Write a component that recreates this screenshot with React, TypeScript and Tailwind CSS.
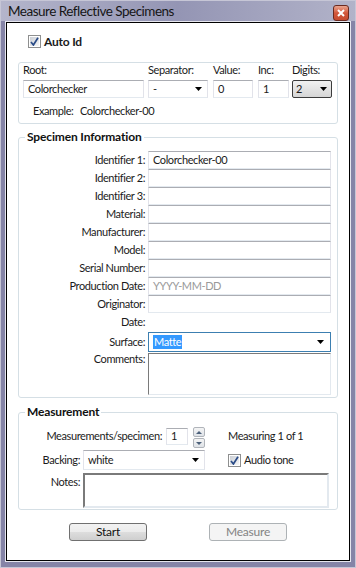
import React from "react";

function Arrow() {
  return (
    <svg width="7" height="4" viewBox="0 0 7 4" className="shrink-0">
      <path d="M0 0h7L3.5 4z" fill="#000" />
    </svg>
  );
}

function CheckBox() {
  return (
    <div className="w-[13px] h-[13px] border border-[#8e8f8f] bg-white p-[1px] shrink-0">
      <div className="w-full h-full bg-gradient-to-br from-[#cbcfd5] to-[#f6f6f6] flex items-center justify-center">
        <svg width="9" height="9" viewBox="0 0 9 9">
          <path d="M1 5l2.4 3L8 0.8" stroke="#2a4b87" strokeWidth="1.7" fill="none" />
        </svg>
      </div>
    </div>
  );
}

function TextBox({ className = "", children }: { className?: string; children?: React.ReactNode }) {
  return (
    <div
      className={`border border-[#e2e3ea] border-t-[#abadb3] border-b-[#e3e9ef] bg-white flex items-center pl-[4px] ${className}`}
    >
      {children}
    </div>
  );
}

function Combo({ className = "", children }: { className?: string; children?: React.ReactNode }) {
  return (
    <div
      className={`border border-[#e2e3ea] border-t-[#abadb3] border-b-[#e3e9ef] bg-white flex items-center justify-between pl-[4px] pr-[5px] ${className}`}
    >
      <span>{children}</span>
      <Arrow />
    </div>
  );
}

function Group({ title, className = "", children }: { title?: string; className?: string; children: React.ReactNode }) {
  return (
    <div className={`relative border border-[#d5dfe5] rounded-[3px] ${className}`}>
      {title && (
        <div className="absolute -top-[8px] left-[6px] px-[2px] bg-white font-bold text-[12px] leading-[14px] tracking-[-0.15px] text-[#111]">
          {title}
        </div>
      )}
      {children}
    </div>
  );
}

const specimenRows = [
  { label: "Identifier 1:", value: "Colorchecker-00" },
  { label: "Identifier 2:" },
  { label: "Identifier 3:" },
  { label: "Material:" },
  { label: "Manufacturer:" },
  { label: "Model:" },
  { label: "Serial Number:" },
  { label: "Production Date:", placeholder: "YYYY-MM-DD" },
  { label: "Originator:" },
];

export default function App() {
  return (
    <div className="w-[356px] h-[568px] border border-[#c6c6d6] bg-[#8584a7] flex flex-col font-['Lato',sans-serif] text-[11px] tracking-[-0.4px] text-[#1b1b1b] overflow-hidden">
      {/* Title bar */}
      <div className="h-[20px] bg-gradient-to-r from-[#b4b5cb] via-[#9495b4] to-[#b2b3c9] flex items-start justify-between pl-[7px] pr-[6px]">
        <span className="text-[13.5px] leading-[21px] text-[#151515] tracking-[-0.5px]">
          Measure Reflective Specimens
        </span>
        <div className="mt-[4px] w-[16px] h-[16px] rounded-[3px] border border-[#6b2a20] bg-gradient-to-b from-[#e9a48f] via-[#d2573b] to-[#c54a2f] flex items-center justify-center">
          <svg width="8" height="8" viewBox="0 0 8 8">
            <path d="M1 1l6 6M7 1L1 7" stroke="#fff" strokeWidth="2" />
          </svg>
        </div>
      </div>

      {/* Client area */}
      <div className="ml-[4px] w-[346px] h-[541px] border border-[#e6e6ee]">
        <div className="w-full h-full border border-black bg-white flex flex-col px-[11px]">
          {/* Auto Id */}
          <div className="flex items-center mt-[12px] ml-[10px] h-[13px]">
            <CheckBox />
            <span className="ml-[3px] font-bold text-[12px] tracking-[-0.2px]">Auto Id</span>
          </div>

          {/* Id pattern */}
          <Group className="mt-[14px] h-[62px]">
            <div className="flex pl-[4px]">
              <div className="flex flex-col w-[121px]">
                <span className="leading-[14px]">Root:</span>
                <TextBox className="mt-[3px] h-[18px] border-[#c9cbd0]">Colorchecker</TextBox>
              </div>
              <div className="flex flex-col w-[60px] ml-[4px]">
                <span className="leading-[14px]">Separator:</span>
                <Combo className="mt-[3px] h-[18px]">-</Combo>
              </div>
              <div className="flex flex-col w-[40px] ml-[5px]">
                <span className="leading-[14px]">Value:</span>
                <TextBox className="mt-[3px] h-[18px]">0</TextBox>
              </div>
              <div className="flex flex-col w-[31px] ml-[5px]">
                <span className="leading-[14px]">Inc:</span>
                <TextBox className="mt-[3px] h-[18px]">1</TextBox>
              </div>
              <div className="flex flex-col w-[40px] ml-[3px]">
                <span className="leading-[14px]">Digits:</span>
                <div className="mt-[3px] h-[18px] border border-[#3c3c3c] rounded-[2px] bg-gradient-to-b from-[#f1f1f1] to-[#d6d6d6] flex items-center justify-between pl-[3px] pr-[4px]">
                  <span>2</span>
                  <Arrow />
                </div>
              </div>
            </div>
            <div className="flex mt-[6px] leading-[14px] pl-[14px]">
              <span className="w-[47px]">Example:</span>
              <span>Colorchecker-00</span>
            </div>
          </Group>

          {/* Specimen information */}
          <Group title="Specimen Information" className="mt-[13px] h-[261px]">
            <div className="flex flex-col pt-[13px]">
              {specimenRows.map((r) => (
                <div key={r.label} className="flex items-center h-[18px]">
                  <span className="w-[126px] text-right">{r.label}</span>
                  <TextBox className="ml-[3px] w-[183px] h-[18px]">
                    {r.value ?? (r.placeholder ? <span className="text-[#9a9a9a]">{r.placeholder}</span> : null)}
                  </TextBox>
                </div>
              ))}
              <div className="flex items-center h-[18px]">
                <span className="w-[126px] text-right">Date:</span>
              </div>
              <div className="flex items-center mt-[1px] h-[20px]">
                <span className="w-[126px] text-right">Surface:</span>
                <div className="ml-[3px] w-[183px] h-[20px] border border-[#3c7fb1] bg-white flex items-center justify-between pl-[4px] pr-[6px]">
                  <span className="bg-[#3399ff] text-white px-[1px] leading-[14px]">Matte</span>
                  <Arrow />
                </div>
              </div>
              <div className="flex items-start mt-[1px]">
                <span className="w-[126px] text-right leading-[14px] mt-[-1px]">Comments:</span>
                <div className="ml-[3px] w-[183px] h-[42px] border border-[#e3e9ef] border-t-[#7a7a7a] border-l-[#7a7a7a] bg-white" />
              </div>
            </div>
          </Group>

          {/* Measurement */}
          <Group title="Measurement" className="mt-[14px] h-[98px]">
            <div className="flex flex-col pt-[13px]">
              <div className="flex items-center h-[21px]">
                <span className="w-[143px] text-right">Measurements/specimen:</span>
                <TextBox className="ml-[4px] w-[22px] h-[17px]">1</TextBox>
                <div className="ml-[5px] w-[12px] flex flex-col gap-[1px] mt-[2px]">
                  <div className="h-[10px] border border-[#b0b4ba] rounded-[2px] bg-gradient-to-b from-[#f4f4f4] to-[#dfe3e8] flex items-center justify-center">
                    <svg width="6" height="3" viewBox="0 0 6 3"><path d="M0 3h6L3 0z" fill="#4c607a" /></svg>
                  </div>
                  <div className="h-[10px] border border-[#b0b4ba] rounded-[2px] bg-gradient-to-b from-[#f4f4f4] to-[#dfe3e8] flex items-center justify-center">
                    <svg width="6" height="3" viewBox="0 0 6 3"><path d="M0 0h6L3 3z" fill="#4c607a" /></svg>
                  </div>
                </div>
                <span className="ml-[23px]">Measuring 1 of 1</span>
              </div>
              <div className="flex items-center mt-[3px] h-[20px]">
                <span className="w-[61px] text-right">Backing:</span>
                <Combo className="ml-[3px] w-[122px] h-[20px]">white</Combo>
                <div className="ml-[23px] flex items-center">
                  <CheckBox />
                  <span className="ml-[3px]">Audio tone</span>
                </div>
              </div>
              <div className="flex items-start mt-[3px]">
                <span className="w-[61px] text-right leading-[14px] mt-[2px]">Notes:</span>
                <div className="ml-[3px] w-[246px] h-[35px] border-2 border-[#e3e9ef] border-t-[#7a7a7a] border-l-[#7a7a7a] bg-white" />
              </div>
            </div>
          </Group>

          {/* Buttons */}
          <div className="flex mt-[13px] ml-[51px]">
            <div className="w-[78px] h-[18px] border border-[#707070] rounded-[3px] bg-[linear-gradient(#f2f2f2_0%,#ebebeb_50%,#dddddd_51%,#cfcfcf_100%)] flex items-center justify-center text-[#111] text-[12px] tracking-[-0.2px]">
              Start
            </div>
            <div className="ml-[62px] w-[78px] h-[18px] border border-[#adb2b5] rounded-[3px] bg-[#f4f4f4] flex items-center justify-center text-[#838383] text-[12px] tracking-[-0.2px]">
              Measure
            </div>
          </div>
        </div>
      </div>
    </div>
  );
}
